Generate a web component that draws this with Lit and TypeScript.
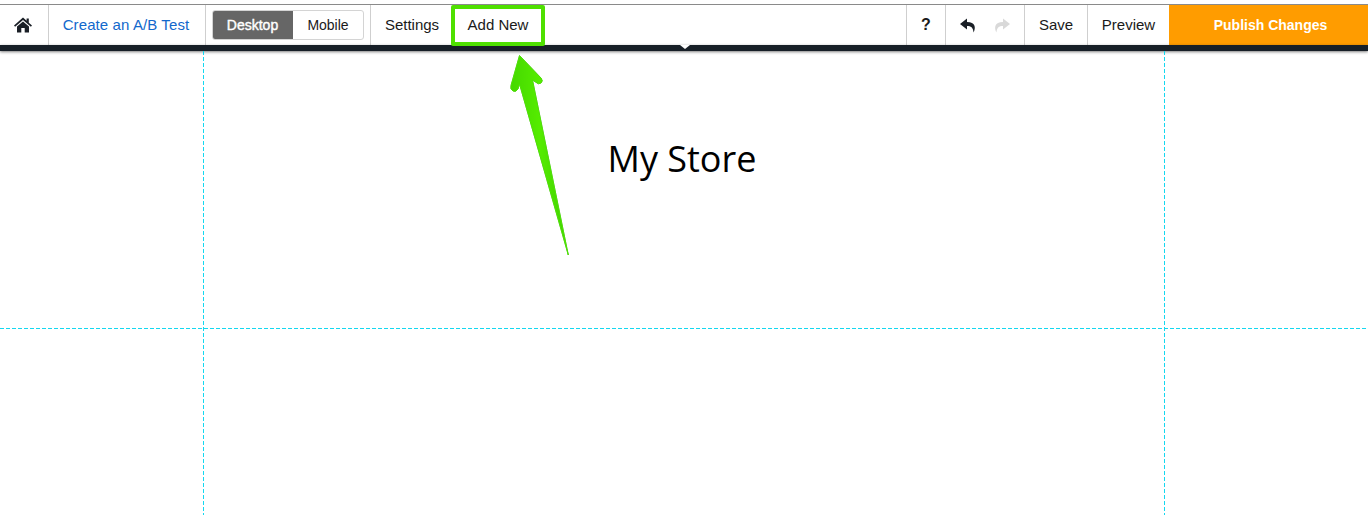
import { LitElement, html, css } from "lit";
import { customElement } from "lit/decorators.js";

@customElement("app-root")
export class AppRoot extends LitElement {
  static styles = css`
    :host { display: block; position: relative; width: 1368px; height: 515px; overflow: hidden; background: #fff; font-family: "Liberation Sans", Arial, sans-serif; font-size: 15px; color: #1a1a1a; }
    .top { padding-top: 4px; }
    .bar { display: flex; box-sizing: border-box; height: 41px; border-top: 1px solid #8a8a8a; background: #fff; }
    .cell { display: flex; align-items: center; justify-content: center; box-sizing: border-box; border-right: 1px solid #cfcfcf; height: 100%; flex: none; }
    .txt { padding-bottom: 1px; }
    .home { width: 49px; padding-right: 3px; }
    .ab { width: 157px; color: #1268cc; padding-right: 2px; letter-spacing: 0.1px; }
    .tog { width: 165px; justify-content: flex-start; padding-left: 6px; font-size: 14px; }
    .seg { display: flex; height: 30px; width: 152px; box-sizing: border-box; border-radius: 3px; overflow: hidden; border: 1px solid #d4d4d4; }
    .seg span { display: flex; align-items: center; justify-content: center; }
    .seg .on { width: 81px; margin: -1px 0 -1px -1px; background: #666; color: #fff; -webkit-text-stroke: 0.4px #fff; }
    .seg .off { flex: 1; }
    .settings { width: 82px; border-right: 0; }
    .addnew { width: 92px; border-right: 0; padding-right: 2px; }
    .spacer { flex: 1; border-right: 1px solid #cfcfcf; }
    .q { width: 39px; font-weight: 700; font-size: 16px; }
    .undo { width: 79px; gap: 18px; }
    .save { width: 63px; }
    .preview { width: 81px; border-right: 0; }
    .publish { width: 199px; border-right: 0; padding-left: 4px; background: #ff9c00; color: #fff; font-size: 14px; font-weight: 700; }
    .dark { height: 6px; background: #171f27; box-shadow: 0 1px 3px rgba(0,0,0,.5); position: relative; }
    .notch { position: absolute; left: 680px; top: 0; width: 0; height: 0; border-left: 5px solid transparent; border-right: 5px solid transparent; border-top: 4px solid #fff; }
    .hl { position: absolute; left: 451px; top: 5px; width: 94px; height: 41px; box-sizing: border-box; border: 4px solid #4fe000; border-radius: 2px; }
    .v { position: absolute; top: 51px; bottom: 0; width: 1px; background: repeating-linear-gradient(to bottom, #14d8f0 0 4px, transparent 4px 6px); }
    .v.a { left: 203px; }
    .v.b { left: 1164px; }
    .h { position: absolute; left: 0; right: 0; top: 328px; height: 1px; background: repeating-linear-gradient(to right, #14d8f0 0 4px, transparent 4px 6px); }
    .title { position: absolute; left: 202px; width: 960px; top: 137px; text-align: center; font-family: "Open Sans", sans-serif; font-size: 36px; line-height: 44px; color: #000; }
    .arrow { position: absolute; left: 0; top: 0; }
    .arrow path { filter: drop-shadow(0.5px 0.5px 0.5px rgba(0,0,0,.3)); }
  `;

  render() {
    return html`
      <div class="top">
        <div class="bar">
          <div class="cell home">
            <svg width="18" height="16" viewBox="0 0 18 16"><path fill="#1a1f26" d="M9 0.6 L12.6 3.8 V1.6 H14.8 V5.7 L18 8.6 L16.9 9.8 L9 2.9 L1.1 9.8 L0 8.6 Z M3 9.6 L9 4.4 L15 9.6 V15.4 H10.7 V11 H7.3 V15.4 H3 Z"/></svg>
          </div>
          <div class="cell ab txt">Create an A/B Test</div>
          <div class="cell tog"><div class="seg"><span class="on">Desktop</span><span class="off">Mobile</span></div></div>
          <div class="cell settings txt">Settings</div>
          <div class="cell addnew txt">Add New</div>
          <div class="cell spacer"></div>
          <div class="cell q">?</div>
          <div class="cell undo">
            <svg width="16" height="15" viewBox="0 0 16 14"><path fill="#1a1f26" d="M7 0 L0 5.5 L7 11 V7.6 C11 7.6 13 9 13.6 14 C16 9 15.5 3.6 7 3.4 Z"/></svg>
            <svg width="16" height="15" viewBox="0 0 16 14"><path fill="#d9d9d9" d="M9 0 L16 5.5 L9 11 V7.6 C5 7.6 3 9 2.4 14 C0 9 .5 3.6 9 3.4 Z"/></svg>
          </div>
          <div class="cell save txt">Save</div>
          <div class="cell preview txt">Preview</div>
          <div class="cell publish">Publish Changes</div>
        </div>
        <div class="dark"><div class="notch"></div></div>
      </div>
      <div class="v a"></div>
      <div class="v b"></div>
      <div class="h"></div>
      <div class="title">My Store</div>
      <div class="hl"></div>
      <svg class="arrow" width="1368" height="515" viewBox="0 0 1368 515">
        <defs>
          <linearGradient id="g" x1="0" y1="0" x2="1" y2="0">
            <stop offset="0" stop-color="#45d800"/>
            <stop offset="0.5" stop-color="#55ec00"/>
            <stop offset="1" stop-color="#3fd000"/>
          </linearGradient>
        </defs>
        <path fill="url(#g)" stroke="#4ce400" stroke-width="1" stroke-linejoin="round" d="M519.5 55.5 L541 78 Q543.5 81 541 83 Q538.5 85 535.5 82 L532.5 80 L568.3 255 L519.5 84 L518 89 Q516 92.5 513 91 Q510 89.5 511 85.5 Z"/>
      </svg>
    `;
  }
}
